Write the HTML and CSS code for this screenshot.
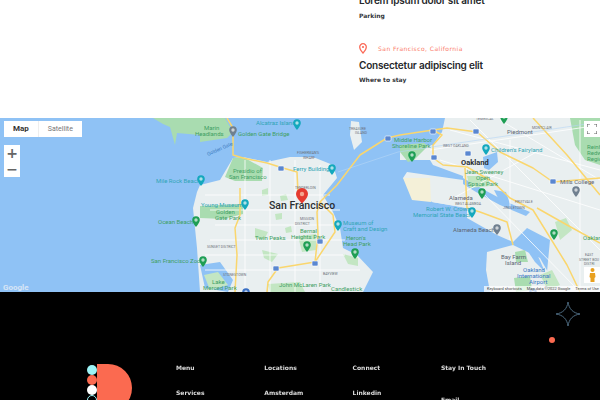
FILE: index.html

```html
<!DOCTYPE html>
<html lang="en">
<head>
  <meta charset="UTF-8">
  <title>Locations</title>
  <link rel="stylesheet" href="styles.css">
</head>
<body>
  <section class="info">
    <h3 class="info-title">Lorem ipsum dolor sit amet</h3>
    <p class="info-sub">Parking</p>
    <div class="info-line"></div>
    <div class="info-place">
      <svg class="info-pin" width="8" height="11" viewBox="0 0 8 11"><path d="M4 .7a3.300 3.300 0 0 0-3.300 3.300C.7 6.300 4 10 4 10s3.300-3.700 3.300-6A3.300 3.300 0 0 0 4 .7z" fill="none" stroke="#fb6a58" stroke-width="1.300"/><circle cx="4" cy="4" r="1.100" fill="#fb6a58"/></svg>
      <span>San Francisco, California</span>
    </div>
    <h3 class="info-title">Consectetur adipiscing elit</h3>
    <p class="info-sub">Where to stay</p>
  </section>

  <section class="map">
    <svg class="map-art" width="600" height="174" viewBox="0 118 600 174">
      <defs>
        <g id="pin"><path d="M-3.800 -5a3.800 3.800 0 0 1 7.600 0c0 2.600-3.800 7-3.800 7s-3.800-4.400-3.800-7z"/><circle cy="-5" r="1.700" fill="#fff" opacity=".65"/></g>
      </defs>
      <rect x="0" y="118" width="600" height="174" fill="#8fc2f5"/>
      <!-- marin -->
      <path d="M153 118L163 124L170 127L175 145L177 133L200 135L200 142L227 138L233 132L225 118Z" fill="#a9dcb0"/>
      <!-- san francisco -->
      <path d="M197 192L200 185L220 180L233 158L243 157L267 162L290 157L313 157L333 165L337 178L323 195L333 212L340 228L343 248L357 255L373 272L363 292L200 292L197 248L193 208Z" fill="#e9eff0"/>
      <!-- east bay -->
      <path d="M445 118L442 132L433 145L417 147L400 152L400 160L430 160L433 165L463 176L463 180L407 172L403 178L432 202L467 208L467 218L497 235L513 242L527 228L550 240L547 272L552 292L600 292L600 118Z" fill="#e9eff0"/>
      <path d="M403 178L430 178L431 202L412 200Z" fill="#f4f0d8"/>
      <path d="M432 178L463 181L477 190L497 200L467 208L432 202Z" fill="#e9eff0"/>
      <path d="M487 252L513 245L540 258L557 288L552 292L490 292L486 270Z" fill="#e9eff0"/>
      <path d="M483 157L497 152L498 162L489 170L484 168Z" fill="#8fc2f5"/>
      <path d="M463 178L477 186L507 202L530 212L526 216L500 205L476 192L463 184Z" fill="#8fc2f5"/>
      <path d="M494 190L506 192L510 204L500 202Z" fill="#8fc2f5"/>
      <path d="M527 250L537 254L545 272L535 262Z" fill="#8fc2f5"/>
      <!-- islands -->
      <path d="M351 121L359 122L362 142L354 150L350 135Z" fill="#e9eff0"/>
      <path d="M586 162L600 156L600 168Z" fill="#e9eff0"/>
      <!-- parks -->
      <path d="M233 158L243 157L263 168L262 181L235 181L225 177Z" fill="#a9dcb0"/>
      <path d="M200 206L243 204L243 214L224 219L200 218Z" fill="#a9dcb0"/>
      <path d="M400 145L424 143L428 146L414 160L408 162L400 152Z" fill="#a9dcb0"/>
      <path d="M570 118L600 118L600 165L585 160L575 145Z" fill="#a9dcb0"/>
      <path d="M467 176L488 176L490 186L470 188Z" fill="#c0e5c0"/>
      <path d="M514 278L530 276L532 290L516 292Z" fill="#a9dcb0"/>
      <path d="M515 252L525 250L528 262L516 262Z" fill="#a9dcb0"/>
      <path d="M255 228L268 232L264 240L255 238Z" fill="#c3e6c3"/>
      <path d="M200 265L220 262L233 280L228 292L205 288Z" fill="#8fc2f5"/>
      <path d="M204 275L218 272L228 285L210 290Z" fill="#c3e6c3"/>
      <path d="M268 284L300 282L305 292L270 292Z" fill="#c3e6c3"/>
      <path d="M262 250L278 254L272 262L264 258Z" fill="#c3e6c3"/>
      <path d="M298 236L316 234L316 250L302 252Z" fill="#c3e6c3"/>
      <path d="M343 254L358 258L358 266L348 264Z" fill="#c3e6c3"/>
      <path d="M280 196L286 194L288 200L281 201ZM262 190L268 188L268 195L262 196ZM285 228L291 226L292 232L286 233ZM275 214L282 213L282 219L276 220Z" fill="#c3e6c3"/>
      <path d="M555 222L566 218L572 230L560 240ZM540 275L552 270L560 285L548 290Z" fill="#c3e6c3"/>
      <!-- streets -->
      <g fill="none" stroke="#ffffff" stroke-width=".8">
        <path d="M205 195L330 195M210 210L340 210M215 225L335 225M210 240L345 240M205 255L345 255M205 270L360 270M245 160L245 292M270 160L270 292M295 160L295 292M320 165L320 292"/>
        <path d="M450 130L600 170M440 160L600 210M470 120L600 250M500 120L600 180M480 190L580 292M510 140L510 240M580 120L580 292M450 200L540 150M430 150L600 125"/>
      </g>
      <!-- highways -->
      <g fill="none" stroke="#fad66d" stroke-width="1.500" stroke-linejoin="round">
        <path d="M227 118L233 128L233 155L243 158L267 163L283 168L297 172L298 192"/>
        <path d="M240 188L240 215L235 228L237 255L235 292"/>
        <path d="M387 138L360 155L337 185L320 202L317 212L318 235L315 262"/>
        <path d="M320 202L333 215L335 232L315 262L278 268L268 282L267 292"/>
        <path d="M387 138L400 135L433 130L447 128L477 132L500 152L533 168L553 182L600 178"/>
        <path d="M433 130L442 135L433 145L433 158L443 165L467 167L493 182L510 198L533 210L567 265L580 292"/>
        <path d="M533 118L567 155L600 195"/>
        <path d="M537 208L567 225L600 243"/>
        <path d="M465 168L467 208L480 212L507 222L513 245"/>
      </g>
      <path d="M338 172L398 152L600 122" fill="none" stroke="#b6d5f5" stroke-width=".6"/>
      <!-- labels -->
      <g class="map-teal">
        <text x="156" y="183">Mile Rock Beach</text>
        <text x="256" y="125">Alcatraz Island</text>
        <text x="293" y="171">Ferry Building</text>
        <text x="201" y="207">Young Museum</text>
        <text x="343" y="225">Museum of</text>
        <text x="343" y="231">Craft and Design</text>
        <text x="491" y="152">Children's Fairyland</text>
        <text x="426" y="211">Robert W. Crown</text>
        <text x="413" y="217">Memorial State Beach</text>
      </g>
      <g class="map-green">
        <text x="158" y="224">Ocean Beach</text>
        <text x="151" y="263">San Francisco Zoo</text>
        <text x="204" y="130">Marin</text>
        <text x="195" y="136">Headlands</text>
        <text x="238" y="136">Golden Gate Bridge</text>
        <text x="216" y="214">Golden</text>
        <text x="215" y="220">Gate Park</text>
        <text x="233" y="173">Presidio of</text>
        <text x="229" y="179">San Francisco</text>
        <text x="255" y="240">Twin Peaks</text>
        <text x="300" y="233">Bernal</text>
        <text x="291" y="239">Heights Park</text>
        <text x="346" y="240">Heron's</text>
        <text x="343" y="246">Head Park</text>
        <text x="279" y="287">John McLaren Park</text>
        <text x="331" y="291">Candlestick</text>
        <text x="212" y="284">Lake</text>
        <text x="203" y="290">Merced Park</text>
        <text x="465" y="174">Jean Sweeney</text>
        <text x="476" y="180">Open</text>
        <text x="468" y="186">Space Park</text>
        <text x="394" y="142">Middle Harbor</text>
        <text x="392" y="148">Shoreline Park</text>
        <text x="583" y="240">Oakland</text>
        <text x="587" y="149">Reinhardt</text>
        <text x="587" y="155">Redwood</text>
        <text x="587" y="161">Regional</text>
      </g>
      <g class="map-gray">
        <text x="507" y="134">Piedmont</text>
        <text x="449" y="200">Alameda</text>
        <text x="453" y="232">Alameda Beach</text>
        <text x="560" y="184">Mills College</text>
        <text x="501" y="259">Bay Farm</text>
        <text x="505" y="265">Island</text>
      </g>
      <g class="map-blue">
        <text x="523" y="272">Oakland</text>
        <text x="517" y="278">International</text>
        <text x="529" y="284">Airport</text>
      </g>
      <g class="map-tiny">
        <text x="208" y="156" class="map-water" transform="rotate(-24 208 156)">Golden Gate</text>
        <text x="297" y="154">FISHERMAN'S</text>
        <text x="303" y="158.500">WHARF</text>
        <text x="295" y="189">TENDERLOIN</text>
        <text x="300" y="220">MISSION</text>
        <text x="295" y="224.500">DISTRICT</text>
        <text x="207" y="248">SUNSET DISTRICT</text>
        <text x="223" y="276">STONESTOWN</text>
        <text x="323" y="275">BAYVIEW</text>
        <text x="349" y="130">TREASURE</text>
        <text x="355" y="134">ISLAND</text>
        <text x="476" y="120">TEMESCAL</text>
        <text x="532" y="129">MONTCLAIR</text>
        <text x="443" y="146.500">WEST OAKLAND</text>
        <text x="455" y="204.500">WEST ALAMEDA</text>
        <text x="515" y="202.500">FRUITVALE</text>
        <text x="503" y="208.500">JINGLETOWN</text>
        <text x="585" y="256">EAST</text>
        <text x="579" y="260.500">STREET BOU</text>
        <text x="584" y="265">DISTRI</text>
      </g>
      <text class="map-city" x="269" y="209">San Francisco</text>
      <text class="map-oak" x="461" y="164.500">Oakland</text>
      <!-- pins -->
      <g fill="#14a8bd">
        <use href="#pin" x="297" y="128"/>
        <use href="#pin" x="332" y="173"/>
        <use href="#pin" x="245" y="208"/>
        <use href="#pin" x="338" y="229"/>
        <use href="#pin" x="486" y="153"/>
        <use href="#pin" x="472" y="216"/>
        <use href="#pin" x="201" y="184"/>
      </g>
      <g fill="#1e9e54">
        <use href="#pin" x="307" y="250"/>
        <use href="#pin" x="355" y="257"/>
        <use href="#pin" x="412" y="160"/>
        <use href="#pin" x="482" y="197"/>
        <use href="#pin" x="554" y="238"/>
        <use href="#pin" x="504" y="122"/>
        <use href="#pin" x="196" y="225"/>
        <use href="#pin" x="203" y="265"/>
      </g>
      <g fill="#6f7f8f">
        <use href="#pin" x="497" y="233"/>
        <use href="#pin" x="576" y="195"/>
        <use href="#pin" x="233" y="135"/>
      </g>
      <g fill="#3b70c4">
        <use href="#pin" x="246" y="297"/>
        <use href="#pin" x="533" y="297"/>
      </g>
      <g fill="#5a87d0" stroke="#fff" stroke-width=".6">
        <rect x="278" y="166" width="6" height="5" rx="1"/><rect x="273" y="266" width="6" height="5" rx="1"/>
        <rect x="312" y="261" width="6" height="5" rx="1"/><rect x="317" y="239" width="6" height="5" rx="1"/>
        <rect x="430" y="129" width="6" height="5" rx="1"/><rect x="473" y="129" width="6" height="5" rx="1"/>
        <rect x="431" y="155" width="6" height="5" rx="1"/><rect x="465" y="151" width="6" height="5" rx="1"/>
        <rect x="550" y="179" width="6" height="5" rx="1"/><rect x="385" y="136" width="6" height="5" rx="1"/>
      </g>
      <!-- marker -->
      <path d="M302 188a6 6 0 0 1 6 6c0 4-6 9.500-6 9.500s-6-5.500-6-9.500a6 6 0 0 1 6-6z" fill="#e53b30"/>
      <circle cx="302" cy="194" r="2.200" fill="#f4a58f"/>
      <text class="map-google" x="3" y="290">Google</text>
    </svg>

    <div class="map-type">
      <span class="map-type-btn is-active">Map</span>
      <span class="map-type-btn">Satellite</span>
    </div>
    <div class="map-zoom">
      <span>+</span>
      <span>−</span>
    </div>
    <div class="map-full">
      <svg width="10" height="10" viewBox="0 0 10 10"><path d="M0 3V0h3M7 0h3v3M10 7v3H7M3 10H0V7" fill="none" stroke="#666" stroke-width="1.200"/></svg>
    </div>
    <div class="map-peg">
      <svg width="7" height="14" viewBox="0 0 7 14"><circle cx="3.500" cy="2" r="2" fill="#e8a020"/><path d="M1 5h5l.5 4-1 1v4h-4v-4l-1-1z" fill="#e8a020"/></svg>
    </div>
    <div class="map-credit">
      <span>Keyboard shortcuts</span><span>Map data ©2022 Google</span><span>Terms of Use</span>
    </div>
  </section>

  <footer class="footer">
    <div class="logo">
      <div class="logo-dots">
        <i class="dot dot-cyan"></i>
        <i class="dot dot-coral"></i>
        <i class="dot dot-white"></i>
        <i class="dot dot-ring"></i>
      </div>
      <div class="logo-d"></div>
    </div>
    <div class="foot-cols">
      <div class="foot-col">
        <a>Menu</a>
        <a>Services</a>
      </div>
      <div class="foot-col">
        <a>Locations</a>
        <a>Amsterdam</a>
      </div>
      <div class="foot-col">
        <a>Connect</a>
        <a>Linkedin</a>
      </div>
      <div class="foot-col foot-col-last">
        <a>Stay In Touch</a>
        <a>Email</a>
      </div>
    </div>
    <svg class="foot-star" width="26" height="26" viewBox="0 0 26 26"><path d="M13 1C14 8 18 12 25 13C18 14 14 18 13 25C12 18 8 14 1 13C8 12 12 8 13 1Z" fill="none" stroke="#4d6b80" stroke-width="1"/></svg>
    <i class="foot-dot"></i>
  </footer>
</body>
</html>
```

FILE: styles.css

```css
html, body { margin: 0; padding: 0; height: 400px; overflow: hidden; background: #fff; }
body { font-family: "DejaVu Sans", sans-serif; }

.info { height: 118px; box-sizing: border-box; padding: 0 0 34px 359px; display: flex; flex-direction: column; justify-content: flex-end; overflow: hidden; }
.info-title { margin: 0; font-family: Inter, sans-serif; font-size: 10px; line-height: 13px; font-weight: 600; color: #26282b; letter-spacing: -.2px; white-space: nowrap; }
.info-sub { margin: 4.500px 0 0; font-size: 6px; line-height: 8px; font-weight: 700; color: #33363a; }
.info-line { width: 157px; height: 1px; background: #fdb3a8; margin: 13px 0 10px; }
.info-place { display: flex; align-items: center; height: 11px; margin-bottom: 5px; font-size: 6px; letter-spacing: .45px; color: #fb7a68; }
.info-pin { margin-right: 11px; }

.map { position: relative; height: 174px; overflow: hidden; }
.map-art { display: block; }
.map-art text { font-family: Roboto, sans-serif; font-size: 6px; }
.map-art .map-teal text { fill: #2fa5b5; }
.map-art .map-green text { fill: #3f9f63; }
.map-art .map-gray text { fill: #5d6570; }
.map-art .map-blue text { fill: #3a78c4; }
.map-art .map-tiny text { font-size: 3.500px; fill: #6b7078; }
.map-art .map-tiny .map-water { font-size: 5px; fill: #3a7ac0; }
.map-art .map-city { font-size: 10.500px; font-weight: 500; fill: #2c2f33; }
.map-art .map-oak { font-size: 7.500px; font-weight: 700; fill: #2c2f33; }
.map-art .map-google { font-size: 8px; font-weight: 700; fill: #e8eef5; opacity: .8; }

.map-type { position: absolute; top: 3px; left: 4px; display: flex; background: #fff; height: 16px; }
.map-type-btn { font-family: Roboto, sans-serif; font-size: 7px; line-height: 16px; color: #777; padding: 0 9px; }
.map-type-btn.is-active { font-size: 8px; font-weight: 700; color: #333; border-right: 1px solid #eee; }
.map-zoom { position: absolute; top: 27px; left: 4px; width: 16px; height: 32px; background: #fff; display: flex; flex-direction: column; }
.map-zoom span { flex: 1; font-family: "DejaVu Sans", sans-serif; font-size: 14px; font-weight: 700; line-height: 16px; text-align: center; color: #666; }
.map-full { position: absolute; top: 3px; right: 0; width: 16px; height: 16px; background: #fff; display: flex; align-items: center; justify-content: center; }
.map-peg { position: absolute; top: 149px; right: 0; width: 16px; height: 16px; background: #fff; display: flex; align-items: center; justify-content: center; }
.map-credit { position: absolute; right: 0; bottom: 0; height: 6px; display: flex; gap: 5px; padding: 0 1px 0 3px; background: rgba(255,255,255,.7); font-family: Roboto, sans-serif; font-size: 4px; line-height: 6px; color: #444; }

.footer { position: relative; height: 108px; background: #000; overflow: hidden; padding: 72px 0 0 87px; box-sizing: border-box; display: flex; }
.logo { display: flex; width: 45px; height: 48px; }
.logo-dots { display: flex; flex-direction: column; width: 10px; padding-top: 1px; }
.dot { display: block; flex: none; width: 10px; height: 10px; border-radius: 50%; box-sizing: border-box; }
.dot-cyan { background: #9cf3f6; }
.dot-coral { background: #fb6a50; }
.dot-white { background: #fff; }
.dot-ring { border: 1px solid #9cf3f6; }
.logo-d { width: 35px; height: 48px; background: #fb6a50; border-radius: 0 24px 24px 0; }

.foot-cols { display: flex; margin-left: 44px; will-change: opacity; }
.foot-col { width: 88.300px; display: flex; flex-direction: column; gap: 17px; font-size: 6px; line-height: 8px; font-weight: 700; color: #dcdcdc; }
.foot-col-last { gap: 24px; }

.foot-star { position: absolute; top: 9px; left: 555px; }
.foot-dot { position: absolute; top: 45px; left: 549px; width: 6px; height: 6px; border-radius: 50%; background: #fb6a50; }
```
